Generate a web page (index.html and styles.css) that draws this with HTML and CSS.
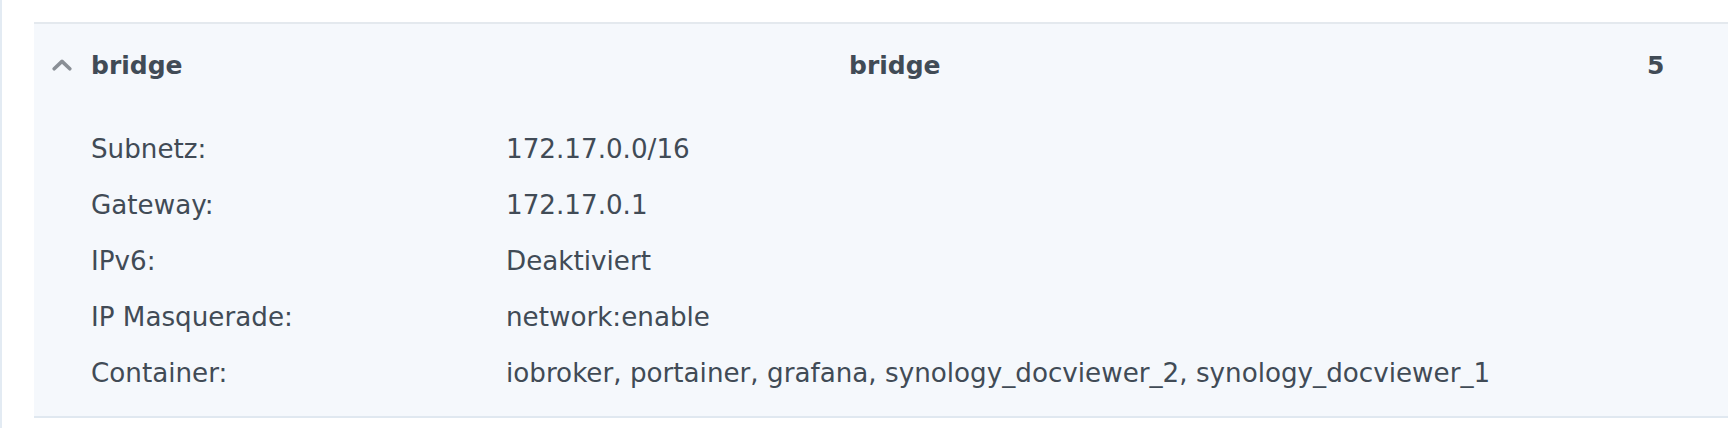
FILE: index.html
```html
<!DOCTYPE html>
<html lang="de">
<head>
    <meta charset="UTF-8">
    <title>Netzwerk</title>
    <link rel="stylesheet" href="styles.css">
</head>
<body>
    <div class="page">
        <div class="side-strip"></div>

        <!-- Netzwerk-Eintrag (aufgeklappt) -->
        <div class="network">
            <div class="network-head">
                <span class="toggle">
                    <svg width="20" height="12" viewBox="0 0 20 12">
                        <path d="M2.2 9.8 L10 2.4 L17.8 9.8" fill="none" stroke="#8a8f96" stroke-width="3.6" stroke-linecap="round" stroke-linejoin="round"/>
                    </svg>
                </span>
                <span class="net-name">bridge</span>
                <span class="net-driver">bridge</span>
                <span class="net-count">5</span>
            </div>

            <div class="network-details">
                <div class="detail-row">
                    <span class="detail-label">Subnetz:</span>
                    <span class="detail-value">172.17.0.0/16</span>
                </div>
                <div class="detail-row">
                    <span class="detail-label">Gateway:</span>
                    <span class="detail-value">172.17.0.1</span>
                </div>
                <div class="detail-row">
                    <span class="detail-label">IPv6:</span>
                    <span class="detail-value">Deaktiviert</span>
                </div>
                <div class="detail-row">
                    <span class="detail-label">IP Masquerade:</span>
                    <span class="detail-value">network:enable</span>
                </div>
                <div class="detail-row">
                    <span class="detail-label">Container:</span>
                    <span class="detail-value">iobroker, portainer, grafana, synology_docviewer_2, synology_docviewer_1</span>
                </div>
            </div>
        </div>
    </div>
</body>
</html>
```

FILE: styles.css
```css
body {
    margin: 0;
    background: #ffffff;
    font-family: 'DejaVu Sans', Verdana, sans-serif;
    font-size: 26.2px;
    color: #414b56;
    overflow: hidden;
}
.page {
    display: flex;
    height: 428px;
}
.side-strip {
    width: 2px;
    background-color: #e3ebf3;
    flex-shrink: 0;
}
.network {
    flex: 1;
    margin-top: 22px;
    margin-left: 32px;
    align-self: flex-start;
    background-color: #f5f8fc;
    border-top: 2px solid #e4e9ee;
    border-bottom: 2px solid #e0e8f0;
}
.network-head {
    display: grid;
    grid-template-columns: 57px 758px 798px 1fr;
    align-items: center;
    height: 56px;
    margin-top: 13px;
    font-size: 25px;
    font-weight: bold;
}
.toggle {
    display: flex;
    align-items: center;
    padding-left: 18px;
}
.toggle svg {
    display: block;
}
.network-details {
    padding: 28px 0 15px 57px;
}
.detail-row {
    display: grid;
    grid-template-columns: 415px 1fr;
    align-items: center;
    height: 56px;
    white-space: nowrap;
}
```
